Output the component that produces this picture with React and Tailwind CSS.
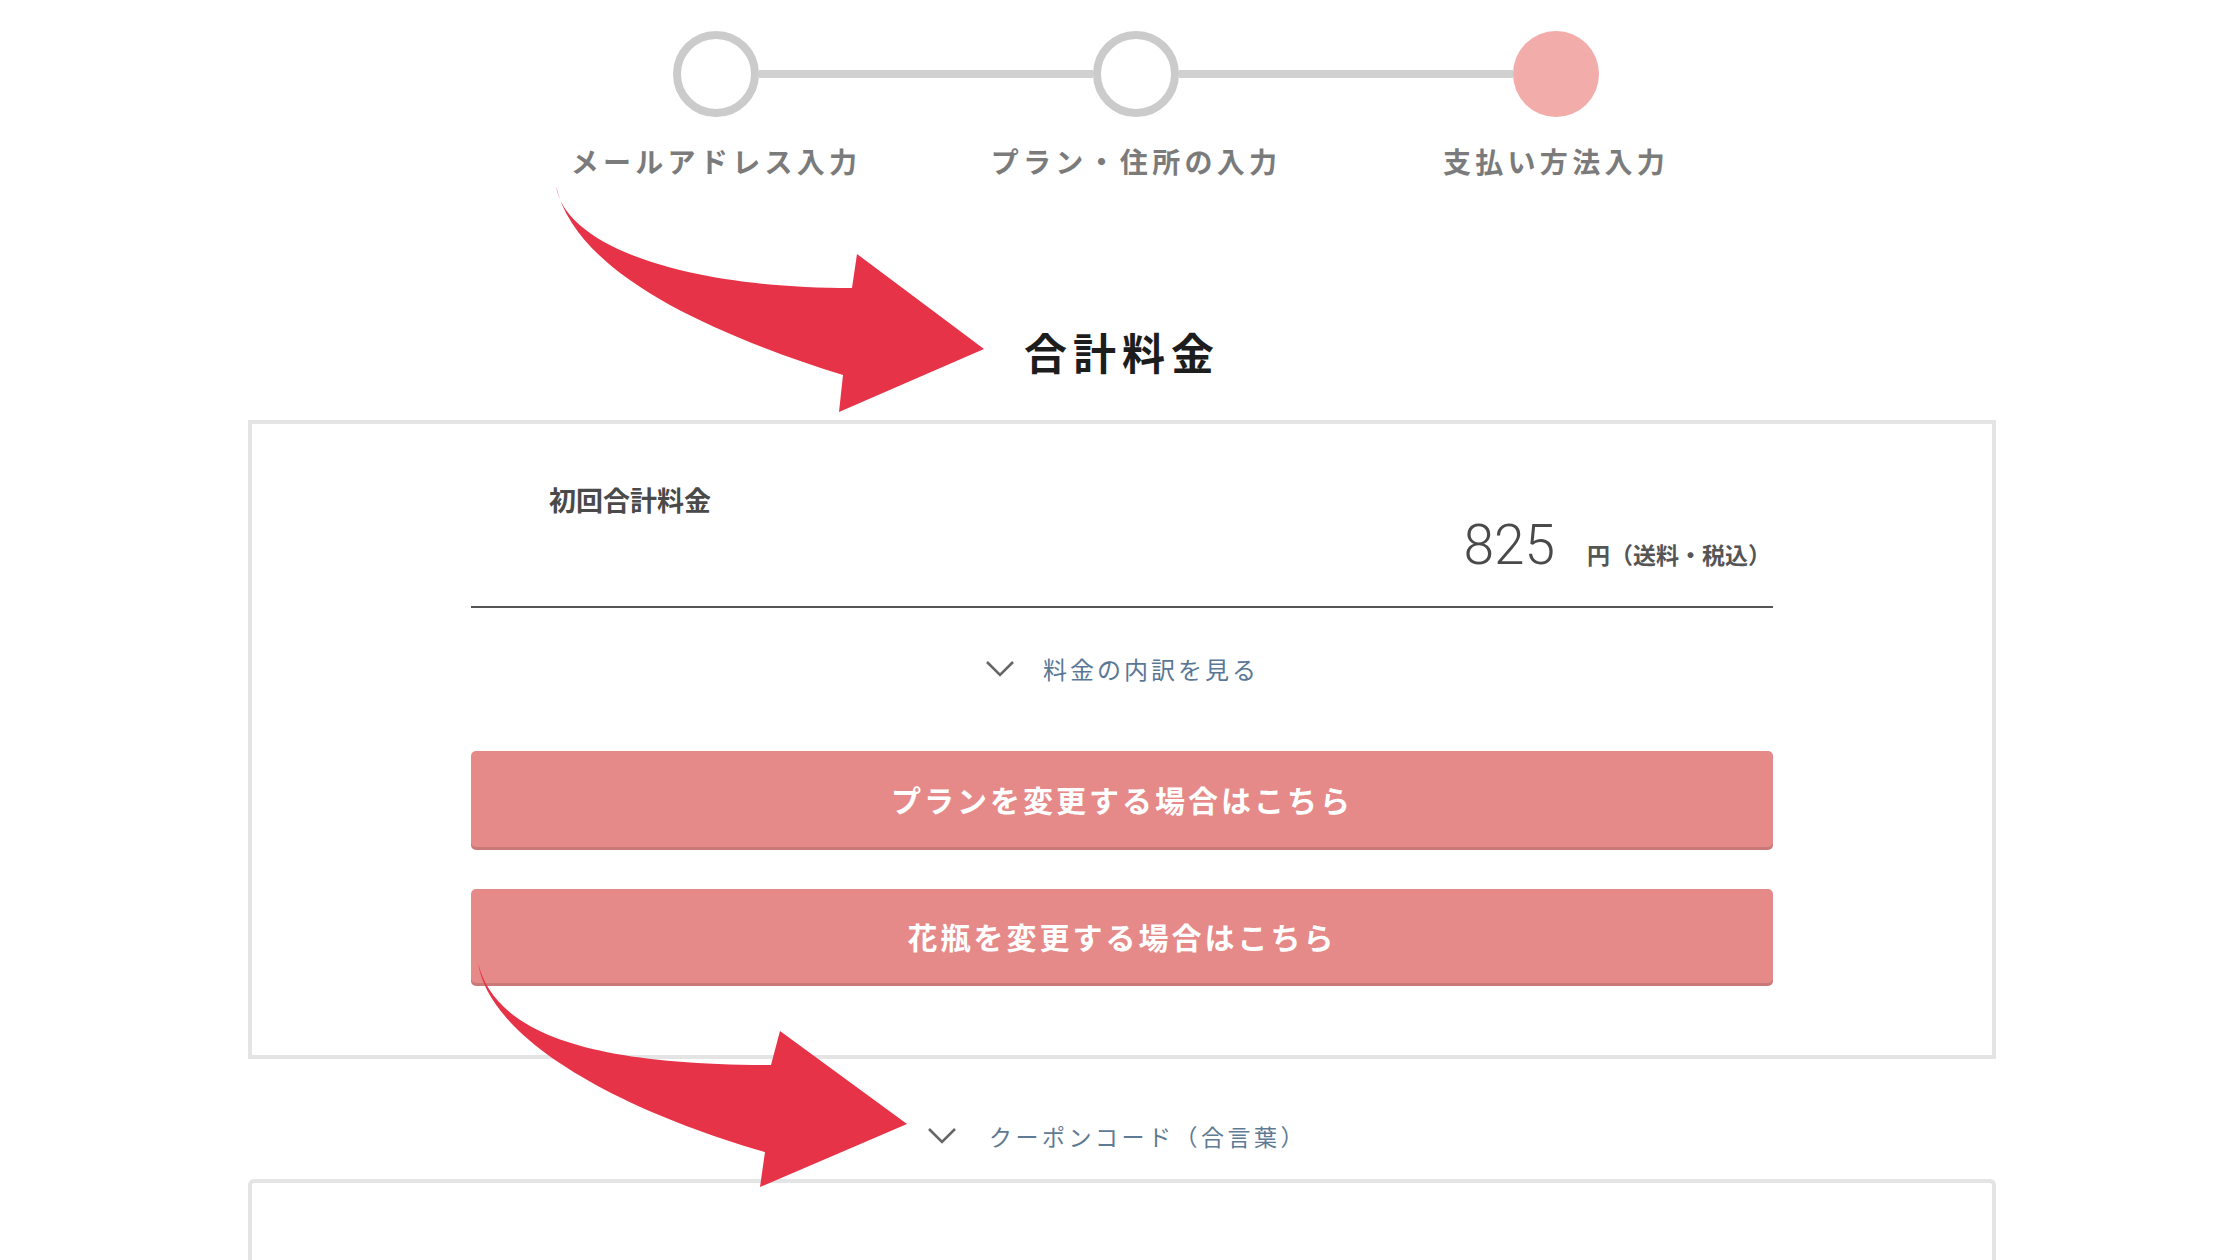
import React from 'react'

const jp = { fontFamily: '"Noto Sans CJK JP", "Noto Sans", sans-serif' }

function Chevron({ className }) {
  return (
    <svg width="30" height="18" viewBox="0 0 30 18" className={className}>
      <path d="M2 2 L15 15 L28 2" fill="none" stroke="#666" strokeWidth="2.6" />
    </svg>
  )
}

function Stepper() {
  const steps = ['メールアドレス入力', 'プラン・住所の入力', '支払い方法入力']
  return (
    <div className="pt-[31px]">
      <div className="flex justify-center items-center pl-[32px]">
        <div className="w-[86px] h-[86px] rounded-full border-[8px] border-[#cbcbcb] bg-white" />
        <div className="w-[334px] h-[8px] bg-[#d0d0d0]" />
        <div className="w-[86px] h-[86px] rounded-full border-[8px] border-[#cbcbcb] bg-white" />
        <div className="w-[334px] h-[8px] bg-[#d0d0d0]" />
        <div className="w-[86px] h-[86px] rounded-full bg-[#f2adab]" />
      </div>
      <div className="flex justify-center pl-[32px] mt-[24px]">
        {steps.map((s) => (
          <div key={s} className="w-[420px] text-center text-[28px] leading-[40px] font-bold tracking-[4.3px] text-[#7b7b7b]">
            {s}
          </div>
        ))}
      </div>
    </div>
  )
}

function Arrows() {
  return (
    <svg className="absolute left-0 top-0 pointer-events-none" width="2240" height="1260" viewBox="0 0 2240 1260">
      <path
        d="M556 186 C565 245 680 288 852 288 L857 254 L984 349 L839 412 L843 375 C700 330 575 270 556 186 Z"
        fill="#e73348"
      />
      <path
        d="M478 963 C495 1030 580 1065 771 1065 L780 1031 L907 1124 L760 1187 L765 1152 C620 1110 490 1040 478 963 Z"
        fill="#e73348"
      />
    </svg>
  )
}

export default function App() {
  return (
    <div className="relative w-[2240px] min-h-[1260px] bg-white overflow-hidden" style={jp}>
      <Stepper />

      <h1 className="mt-[140px] text-center text-[43px] leading-[60px] font-bold tracking-[6px] text-[#1d1d1d] pl-[4px]">
        合計料金
      </h1>

      <div className="pl-[4px]">
        <div className="mx-auto mt-[39px] w-[1748px] border-4 border-[#e4e4e4] bg-white">
          <div className="mx-auto w-[1302px] pt-[58px] pb-[72px]">
            <div className="pl-[78px] text-[27px] leading-[36px] font-semibold text-[#4a4a4a]">初回合計料金</div>

            <div className="flex justify-end items-baseline pr-[2px] pb-[33px] border-b-2 border-[#555]">
              <span className="text-[55px] leading-none font-light text-[#4a4a4a]" style={{ fontFamily: 'Roboto, "Noto Sans", sans-serif' }}>
                825
              </span>
              <span className="ml-[32px] text-[23px] leading-none font-semibold text-[#555]">円（送料・税込）</span>
            </div>

            <div className="mt-[41px] flex justify-center items-center h-[40px] gap-[28px]">
              <Chevron />
              <span className="text-[24px] tracking-[3px] text-[#5a7896]">料金の内訳を見る</span>
            </div>

            <button className="mt-[62px] w-full h-[96px] rounded-[5px] bg-[#e68a89] shadow-[0_3px_0_#c97978] text-white text-[30px] font-bold tracking-[3px]">
              プランを変更する場合はこちら
            </button>
            <button className="mt-[42px] w-full h-[94px] rounded-[5px] bg-[#e68a89] shadow-[0_3px_0_#c97978] text-white text-[30px] font-bold tracking-[3px]">
              花瓶を変更する場合はこちら
            </button>
          </div>
        </div>

        <div className="mt-[57px] flex justify-center items-center h-[40px] gap-[32px] pr-[10px]">
          <Chevron />
          <span className="text-[23px] tracking-[3.5px] text-[#5f7a94]">クーポンコード（合言葉）</span>
        </div>

        <div className="mx-auto mt-[23px] w-[1748px] h-[140px] border-4 border-b-0 border-[#e4e4e4] rounded-t-[6px] bg-white" />
      </div>

      <Arrows />
    </div>
  )
}
